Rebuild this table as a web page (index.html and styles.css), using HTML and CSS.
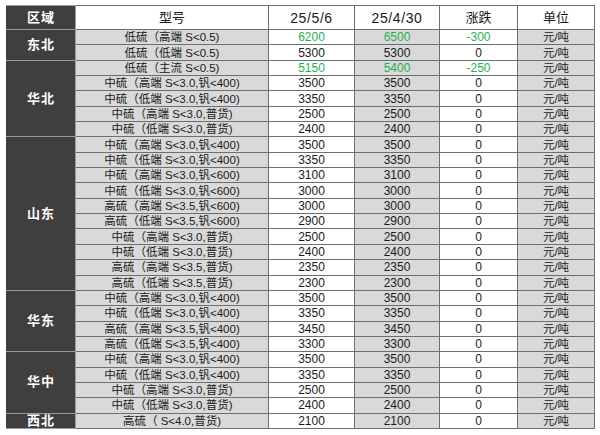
FILE: index.html
```html
<!DOCTYPE html>
<html lang="zh">
<head>
<meta charset="utf-8">
<link rel="stylesheet" href="styles.css">
</head>
<body>
<table class="price">
  <colgroup>
    <col class="c-region"><col class="c-model"><col class="c-d1"><col class="c-d2"><col class="c-chg"><col class="c-unit">
  </colgroup>
  <thead>
    <tr class="head">
      <th class="region">区域</th>
      <th>型号</th>
      <th class="date">25/5/6</th>
      <th class="date">25/4/30</th>
      <th>涨跌</th>
      <th>单位</th>
    </tr>
  </thead>
  <tbody>
    <tr class="up"><td class="region" rowspan="2">东北</td><td class="model">低硫（高端 S&lt;0.5)</td><td class="num">6200</td><td class="num alt">6500</td><td class="num">-300</td><td class="unit">元/吨</td></tr>
    <tr><td class="model">低硫（低端 S&lt;0.5)</td><td class="num">5300</td><td class="num alt">5300</td><td class="num">0</td><td class="unit">元/吨</td></tr>

    <tr class="up"><td class="region" rowspan="5">华北</td><td class="model">低硫（主流 S&lt;0.5)</td><td class="num">5150</td><td class="num alt">5400</td><td class="num">-250</td><td class="unit">元/吨</td></tr>
    <tr><td class="model">中硫（高端 S&lt;3.0,钒&lt;400)</td><td class="num">3500</td><td class="num alt">3500</td><td class="num">0</td><td class="unit">元/吨</td></tr>
    <tr><td class="model">中硫（低端 S&lt;3.0,钒&lt;400)</td><td class="num">3350</td><td class="num alt">3350</td><td class="num">0</td><td class="unit">元/吨</td></tr>
    <tr><td class="model">中硫（高端 S&lt;3.0,普货)</td><td class="num">2500</td><td class="num alt">2500</td><td class="num">0</td><td class="unit">元/吨</td></tr>
    <tr><td class="model">中硫（低端 S&lt;3.0,普货)</td><td class="num">2400</td><td class="num alt">2400</td><td class="num">0</td><td class="unit">元/吨</td></tr>

    <tr><td class="region" rowspan="10">山东</td><td class="model">中硫（高端 S&lt;3.0,钒&lt;400)</td><td class="num">3500</td><td class="num alt">3500</td><td class="num">0</td><td class="unit">元/吨</td></tr>
    <tr><td class="model">中硫（低端 S&lt;3.0,钒&lt;400)</td><td class="num">3350</td><td class="num alt">3350</td><td class="num">0</td><td class="unit">元/吨</td></tr>
    <tr><td class="model">中硫（高端 S&lt;3.0,钒&lt;600)</td><td class="num">3100</td><td class="num alt">3100</td><td class="num">0</td><td class="unit">元/吨</td></tr>
    <tr><td class="model">中硫（低端 S&lt;3.0,钒&lt;600)</td><td class="num">3000</td><td class="num alt">3000</td><td class="num">0</td><td class="unit">元/吨</td></tr>
    <tr><td class="model">高硫（高端 S&lt;3.5,钒&lt;600)</td><td class="num">3000</td><td class="num alt">3000</td><td class="num">0</td><td class="unit">元/吨</td></tr>
    <tr><td class="model">高硫（低端 S&lt;3.5,钒&lt;600)</td><td class="num">2900</td><td class="num alt">2900</td><td class="num">0</td><td class="unit">元/吨</td></tr>
    <tr><td class="model">中硫（高端 S&lt;3.0,普货)</td><td class="num">2500</td><td class="num alt">2500</td><td class="num">0</td><td class="unit">元/吨</td></tr>
    <tr><td class="model">中硫（低端 S&lt;3.0,普货)</td><td class="num">2400</td><td class="num alt">2400</td><td class="num">0</td><td class="unit">元/吨</td></tr>
    <tr><td class="model">高硫（高端 S&lt;3.5,普货)</td><td class="num">2350</td><td class="num alt">2350</td><td class="num">0</td><td class="unit">元/吨</td></tr>
    <tr><td class="model">高硫（低端 S&lt;3.5,普货)</td><td class="num">2300</td><td class="num alt">2300</td><td class="num">0</td><td class="unit">元/吨</td></tr>

    <tr><td class="region" rowspan="4">华东</td><td class="model">中硫（高端 S&lt;3.0,钒&lt;400)</td><td class="num">3500</td><td class="num alt">3500</td><td class="num">0</td><td class="unit">元/吨</td></tr>
    <tr><td class="model">中硫（低端 S&lt;3.0,钒&lt;400)</td><td class="num">3350</td><td class="num alt">3350</td><td class="num">0</td><td class="unit">元/吨</td></tr>
    <tr><td class="model">高硫（高端 S&lt;3.5,钒&lt;400)</td><td class="num">3450</td><td class="num alt">3450</td><td class="num">0</td><td class="unit">元/吨</td></tr>
    <tr><td class="model">高硫（低端 S&lt;3.5,钒&lt;400)</td><td class="num">3300</td><td class="num alt">3300</td><td class="num">0</td><td class="unit">元/吨</td></tr>

    <tr><td class="region" rowspan="4">华中</td><td class="model">中硫（高端 S&lt;3.0,钒&lt;400)</td><td class="num">3500</td><td class="num alt">3500</td><td class="num">0</td><td class="unit">元/吨</td></tr>
    <tr><td class="model">中硫（低端 S&lt;3.0,钒&lt;400)</td><td class="num">3350</td><td class="num alt">3350</td><td class="num">0</td><td class="unit">元/吨</td></tr>
    <tr><td class="model">中硫（高端 S&lt;3.0,普货)</td><td class="num">2500</td><td class="num alt">2500</td><td class="num">0</td><td class="unit">元/吨</td></tr>
    <tr><td class="model">中硫（低端 S&lt;3.0,普货)</td><td class="num">2400</td><td class="num alt">2400</td><td class="num">0</td><td class="unit">元/吨</td></tr>

    <tr><td class="region">西北</td><td class="model">高硫（ S&lt;4.0,普货)</td><td class="num">2100</td><td class="num alt">2100</td><td class="num">0</td><td class="unit">元/吨</td></tr>
  </tbody>
</table>
</body>
</html>
```

FILE: styles.css
```css
html, body {
  margin: 0;
  padding: 0;
  background: #ffffff;
}
body {
  padding: 5px 6px;
  font-family: "Liberation Sans", "Noto Sans CJK SC", sans-serif;
  color: #1a1a1a;
}
.price {
  border-collapse: collapse;
  table-layout: fixed;
  width: 588px;
  border-top: 1px solid #c8c8c8;
  border-right: 1px solid #9a9a9a;
}
.c-region { width: 69px; }
.c-model { width: 193px; }
.c-d1 { width: 86px; }
.c-d2 { width: 85px; }
.c-chg { width: 78px; }
.c-unit { width: 77px; }

.price th,
.price td {
  padding: 0;
  text-align: center;
  vertical-align: middle;
  border: 1px solid #6e6e6e;
  white-space: nowrap;
  overflow: hidden;
}
.head th {
  height: 23px;
  font-size: 13px;
  font-weight: normal;
  background: #ffffff;
  line-height: 16px;
}
.head th.date {
  font-size: 14px;
  letter-spacing: 0.6px;
}
.price tbody td {
  height: 14.35px;
  line-height: 14px;
  font-size: 12px;
}
.price .region {
  background: #3f3f3f;
  color: #ffffff;
  font-weight: bold;
  font-size: 13px;
  letter-spacing: 1px;
  border-color: #9c9c9c;
  border-left-color: #3f3f3f;
}
.price .model {
  background: #d9d9d9;
  font-size: 11.5px;
}
.price .num { background: #ffffff; }
.price .num.alt { background: #d9d9d9; }
.price .unit {
  background: #d9d9d9;
  font-size: 11.5px;
}
.up .num { color: #1fb153; }
```
